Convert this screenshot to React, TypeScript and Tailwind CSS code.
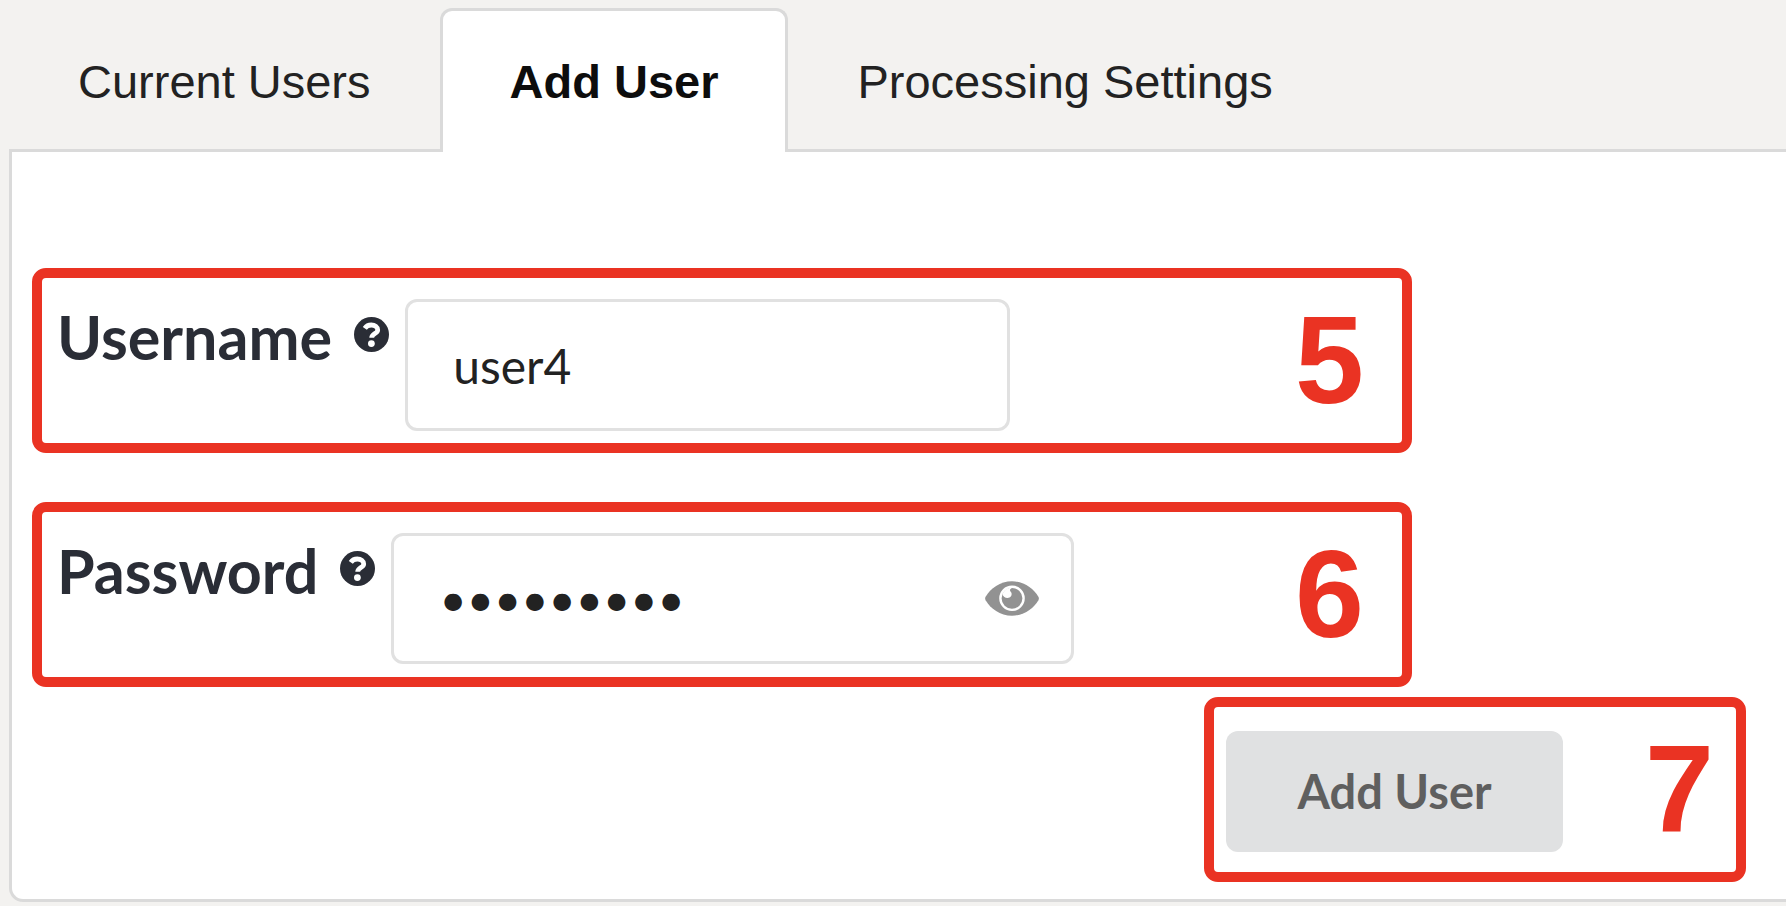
import { useState, type ReactNode } from 'react';

const tabs = ['Current Users', 'Add User', 'Processing Settings'];

function Callout({ number, className, children }: { number: number; className: string; children: ReactNode }) {
  return (
    <div className={`flex h-[185px] items-start justify-between rounded-[14px] border-10 border-[#ea3323] ${className}`}>
      {children}
      <span className="font-['Liberation_Sans',sans-serif] text-[124px] leading-[165px] font-bold text-[#ea3323]">{number}</span>
    </div>
  );
}

function HelpIcon() {
  return (
    <svg viewBox="0 0 35 35" className="size-[35px]" aria-hidden="true">
      <circle cx="17.5" cy="17.5" r="17.5" fill="currentColor" />
      <path
        d="M10.8 11.4C12.4 9 14.6 8 17.3 8C21 8 23.7 10 23.7 12.9C23.7 16.6 17.7 16.5 17.7 20.8"
        fill="none"
        stroke="#fff"
        strokeWidth="4.8"
      />
      <circle cx="17.4" cy="26.6" r="3.4" fill="#fff" />
    </svg>
  );
}

function FieldLabel({ htmlFor, children }: { htmlFor: string; children: ReactNode }) {
  return (
    <label htmlFor={htmlFor} className="flex items-start gap-[22px] pt-[23px] pr-4 text-[61px] leading-[72px] font-bold text-[#2a2d36]">
      {children}
      <span className="pt-4">
        <HelpIcon />
      </span>
    </label>
  );
}

function EyeIcon() {
  return (
    <svg viewBox="0 0 54 35" className="h-[35px] w-[54px]" aria-hidden="true">
      <path
        fill="#929292"
        d="M27 0.3C39 0.3 48.5 7.5 53.4 15.8Q54.4 17.5 53.4 19.2C48.5 27.5 39 34.7 27 34.7S5.5 27.5 0.6 19.2Q-0.4 17.5 0.6 15.8C5.5 7.5 15 0.3 27 0.3Z"
      />
      <circle cx="27" cy="17.3" r="11.6" fill="#929292" stroke="#fff" strokeWidth="2.4" />
      <path fill="#fff" d="M27 7C23.5 8.6 25.5 10.2 26.3 11.5C27.5 14.2 25.5 17 22.5 17C19.8 17 18.5 15.5 17.5 13.5C19 9 22.5 6.5 27 7Z" />
    </svg>
  );
}

export default function App() {
  const [active, setActive] = useState('Add User');
  const [username, setUsername] = useState('user4');
  const [password, setPassword] = useState('password1');
  const [visible, setVisible] = useState(false);

  return (
    <div className="min-h-screen overflow-x-hidden bg-[#f3f2f0] pt-2 pb-1 pl-[9px] font-[Lato,sans-serif]">
      <div role="tablist" className="flex font-['Liberation_Sans',sans-serif] text-[47px] leading-[56px]">
        {tabs.map((tab) => (
          <button
            key={tab}
            type="button"
            role="tab"
            aria-selected={tab === active}
            onClick={() => setActive(tab)}
            className={
              tab === active
                ? 'relative -mb-[3px] h-[144px] rounded-t-[12px] border-3 border-b-0 border-[#dadada] bg-white px-[67px] font-bold text-[#0d0d0d]'
                : 'h-[141px] px-[69px] pt-[6px] text-[#222222]'
            }
          >
            {tab}
          </button>
        ))}
      </div>
      <form
        onSubmit={(event) => event.preventDefault()}
        className="flex h-[753px] flex-col rounded-bl-[14px] border-y-3 border-l-3 border-[#dadada] bg-white pt-[116px] pr-10 pl-5"
      >
        <Callout number={5} className="w-full max-w-[1380px] pr-[38px] pl-[15px]">
          <div className="flex flex-1 items-start">
            <FieldLabel htmlFor="username">Username</FieldLabel>
            <input
              id="username"
              value={username}
              onChange={(event) => setUsername(event.target.value)}
              className="mt-[21px] h-[132px] w-[605px] rounded-[12px] border-3 border-[#e1e1e1] px-[45px] text-[48px] text-[#222222] outline-none"
            />
          </div>
        </Callout>
        <Callout number={6} className="mt-[49px] w-full max-w-[1380px] pr-[38px] pl-[15px]">
          <div className="flex flex-1 items-start">
            <FieldLabel htmlFor="password">Password</FieldLabel>
            <div className="mt-[21px] flex h-[131px] w-[683px] items-center rounded-[12px] border-3 border-[#e1e1e1] pr-8 pl-[45px]">
              <input
                id="password"
                type={visible ? 'text' : 'password'}
                value={password}
                onChange={(event) => setPassword(event.target.value)}
                className="min-w-0 flex-1 text-[47px] text-[#222222] outline-none"
              />
              <button type="button" aria-label="Show password" onClick={() => setVisible(!visible)}>
                <EyeIcon />
              </button>
            </div>
          </div>
        </Callout>
        <Callout number={7} className="mt-[10px] w-[542px] self-end pr-[22px] pl-3">
          <button
            type="submit"
            className="mt-6 h-[121px] w-[337px] rounded-[12px] bg-[#e0e1e2] text-[47px] font-bold text-[#5f5f5f]"
          >
            Add User
          </button>
        </Callout>
      </form>
    </div>
  );
}
